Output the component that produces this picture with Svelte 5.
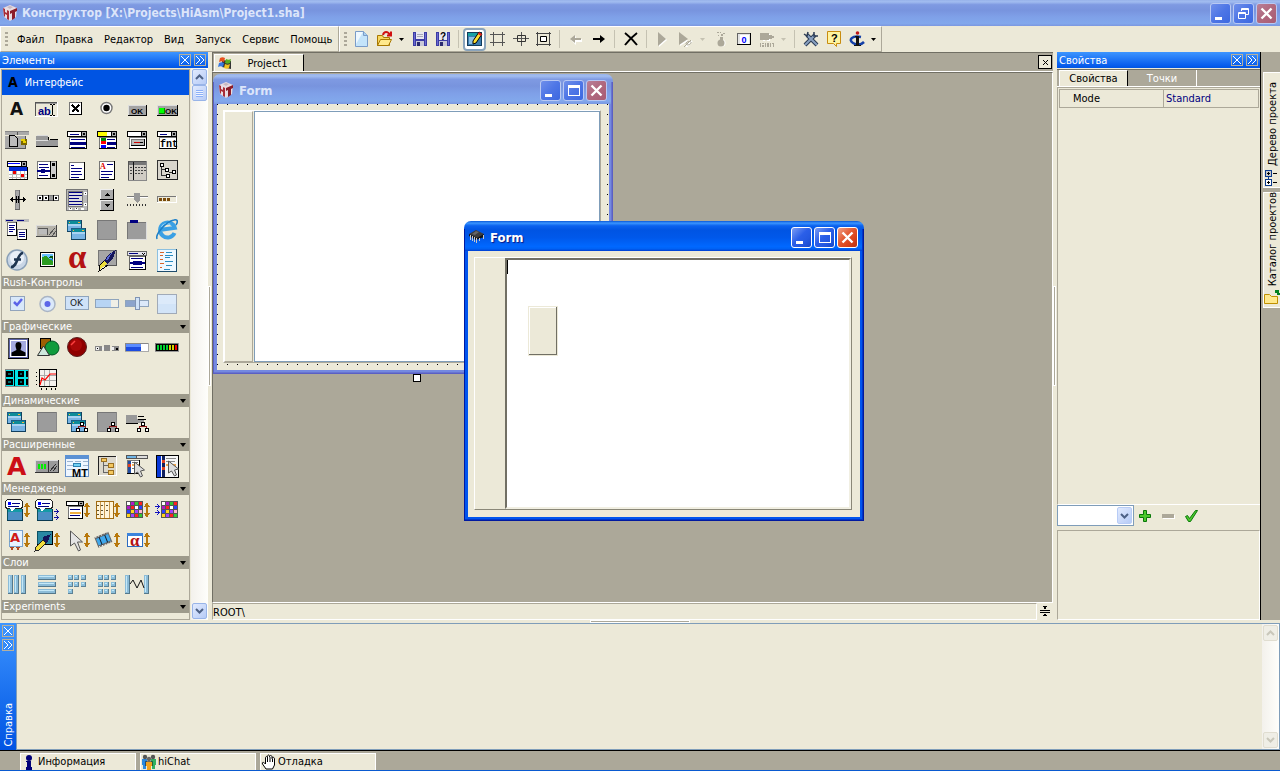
<script lang="ts">
	// Small helpers for the pixel icons
	const p = (fill: string, boxes: string) =>
		`<path fill="${fill}" d="${boxes
			.split(' ')
			.map((b) => {
				const [x, y, w, h] = b.split(',');
				return `M${x} ${y}h${w}v${h}h-${w}z`;
			})
			.join('')}"/>`;
	const s = (stroke: string, d: string, w = 1, fill = 'none') =>
		`<path fill="${fill}" stroke="${stroke}" stroke-width="${w}" d="${d}"/>`;
	const f = (fill: string, d: string) => `<path fill="${fill}" d="${d}"/>`;
	const t = (x: number, y: number, size: number, fill: string, text: string, font = 'Liberation Sans') =>
		`<text x="${x}" y="${y}" font-size="${size}" font-weight="bold" font-family="${font}" fill="${fill}">${text}</text>`;
	const c = (x: number, y: number, r: number, fill: string, stroke = 'none', w = 1) =>
		`<circle cx="${x}" cy="${y}" r="${r}" fill="${fill}" stroke="${stroke}" stroke-width="${w}"/>`;
	// framed box: dark right and bottom side, grey left and top
	const box = (x: number, y: number, w: number, h: number, fill = '#fff', tl = '#777', br = '#000') =>
		p(br, `${x},${y},${w},${h}`) + p(tl, `${x},${y},${w - 1},${h - 1}`) + p(fill, `${x + 1},${y + 1},${w - 2},${h - 2}`);
	const smooth = (markup: string) => `<g shape-rendering="auto">${markup}</g>`;

	const navy = '#000080';
	const comboHead = box(5, 6, 20, 6, '#fff', '#000') + p('#aaa', '20,7,4,4') + p('#000', '19,6,1,6 21,8,2,2');
	const comboBody = comboHead + box(7, 12, 18, 12);
	const win = (x: number, y: number) =>
		box(x, y, 15, 12, '#79b4e4', '#1d5c85', '#12405f') +
		p('#0d8b98', `${x + 1},${y + 1},13,3`) +
		p('#ffb43c', `${x + 2},${y + 2},1,1 ${x + 11},${y + 2},2,1`) +
		p('#a9d2f2', `${x + 1},${y + 4},13,2`);
	const links = (x: number, y: number) =>
		s('#8e1b1b', `M${x + 2.5} ${y + 7}v-3h7v3M${x + 4} ${y + 2.5}h4`) +
		box(x + 4, y, 4, 4, '#fff', '#000') +
		box(x, y + 6, 4, 4, '#fff', '#000') +
		box(x + 8, y + 6, 4, 4, '#fff', '#000');
	const updown = (x: number) => f('#b8780c', `M${x} 12l3-5 3 5h-2v1h-2v-1zM${x + 2} 13h2v5h2l-3 5-3-5h2z`);
	const bubble =
		box(5, 14, 16, 12, '#4b8fc4', '#0b5264', '#0b3950') +
		p('#169aa6', '6,14,14,3') +
		`<rect x="3.5" y="4.5" width="17" height="9" rx="3" fill="#fff" stroke="#222"/>` +
		f('#fff', 'M8 13h5l-3 4z') +
		p('#00f', '6,7,3,3') +
		p(navy, '10,8,8,1 6,11,11,1');
	const tabsPic = p('#999', '4,15,22,6 4,11,12,5') + p('#000', '4,21,22,1 16,12,1,3 18,14,8,1') + p('#ddd', '4,15,12,1 5,10,11,1');
	const palette = (x: number) =>
		p('#555', `${x},6,17,17`) +
		p('#fff', `${x + 1},7,3,3 ${x + 9},11,3,3`) +
		p('#b018c8', `${x + 5},7,3,3 ${x + 1},11,3,3`) +
		p('#32c832', `${x + 9},7,3,3 ${x + 13},19,3,3`) +
		p('#ff2020', `${x + 13},7,3,3 ${x + 5},11,3,3 ${x + 9},19,3,3`) +
		p('#2c40ff', `${x + 13},11,3,3 ${x + 1},15,3,3`) +
		p('#ffd21e', `${x + 5},15,3,3 ${x + 1},19,3,3`) +
		p('#a040ff', `${x + 9},15,3,3 ${x + 5},19,3,3`) +
		p('#ffb4d0', `${x + 13},15,3,3`);
	const cube = (x: number, y: number) =>
		p('#5d8296', `${x},${y},5,5`) + p('#8cc0dc', `${x},${y},4,4`) + p('#c4e8f8', `${x + 1},${y + 1},2,1`);
	const vbar = (x: number) => p('#54788c', `${x},6,5,19`) + p('#8cbcd8', `${x},6,4,18`) + p('#c4e8f8', `${x + 1},7,1,16`);
	const hbar = (y: number) => p('#54788c', `6,${y},18,5`) + p('#8cbcd8', `6,${y},17,4`) + p('#c4e8f8', `7,${y + 1},15,1`);

	const icons: Record<string, string> = {
		label: t(8, 20, 17, '#111', 'A', 'DejaVu Sans'),
		edit: box(3, 7, 23, 15, '#ece9d8', '#555', '#fff') + p('#999', '4,8,21,1') + t(6, 20, 11, navy, 'ab') + p('#000', '18,9,2,1 21,9,2,1 20,10,1,10 18,20,2,1 21,20,2,1'),
		check: box(7, 7, 13, 13, '#fff', '#777') + s('#000', 'M10 10l7 7M17 10l-7 7', 2),
		radio: smooth(c(14.5, 13, 5.5, '#fff', '#777', 1.4) + c(14.5, 13, 3.2, '#000')),
		button: box(6, 10, 19, 11, '#a3a3a3', '#ddd') + t(9, 19, 8, '#000', 'OK'),
		led: box(5, 10, 21, 11, '#a3a3a3', '#ddd') + p('#080', '7,13,6,6') + p('#0f0', '7,13,5,5') + t(13, 19, 8, '#000', 'OK'),
		pages: p('#888', '3,6,24,1') + p('#aaa', '3,7,24,3 3,11,20,12') + p('#555', '15,7,1,3 3,23,20,1 23,11,1,13') + s('#000', 'M7.5 10.500h5l3 3v8h-8z', 1, '#bbb') + p('#7a6500', '19,14,6,6') + p('#e8d000', '19,14,4,2 21,16,3,2'),
		tabs: tabsPic,
		combo: comboBody + p(navy, '8,9,9,1 9,14,14,1 8,17,16,3 9,22,14,1'),
		colorcombo: comboBody + p('#ff0', '6,7,9,4') + p('#080', '9,13,5,3') + p('#f00', '9,16,5,3') + p('#00f', '9,20,5,3') + p(navy, '15,14,8,1 15,17,9,3 15,22,8,1'),
		datecombo: comboBody + box(9, 14, 14, 7, '#bbb') + p('#c00', '12,17,6,1') + p('#000', '18,17,3,1'),
		fontcombo: comboBody + p(navy, '8,9,7,1') + t(8, 22, 10, '#000', 'fnt', 'Liberation Mono'),
		calendar: comboHead + p('#00f', '6,8,12,1') + p('#fff', '7,12,19,13') + p('#0028d8', '7,12,19,4') + p('#bbb', '10,16,1,8 14,16,1,8 18,16,1,8 22,16,1,8 7,19,18,1 7,22,18,1') + p('#e00', '11,16,3,3 19,19,3,3') + p('#000', '7,24,19,1 25,12,1,12'),
		listbox: box(5, 6, 20, 18) + p('#ccc', '19,7,5,16') + p('#000', '18,6,1,18 20,8,3,3 20,19,3,3') + p(navy, '7,9,9,1 7,12,10,1 5,15,13,2 9,14,4,4 7,20,9,1'),
		memo: box(7, 7, 16, 18) + p(navy, '9,10,3,1 9,13,11,1 9,16,10,1 9,19,11,1 9,22,8,1'),
		richedit: box(7, 6, 16, 19) + t(8, 14, 8, '#d00', 'A', 'Liberation Serif') + p(navy, '15,9,6,1 9,16,12,1 9,19,11,1 9,22,8,1'),
		grid: box(6, 6, 19, 20, '#d0ccc4', '#555', '#888') + p('#777', '7,7,17,3') + p('#111', '11,7,1,18') + p('#444', '8,12,2,1 13,12,2,1 16,12,2,1 19,12,2,1 22,12,2,1 8,15,2,1 13,15,2,1 16,15,2,1 19,15,2,1 22,15,2,1 8,18,2,1 13,18,2,1 16,18,2,1 19,18,2,1'),
		tree: box(5, 5, 21, 20, '#d8d5cc', '#333', '#222') + p('#333', '9,11,1,10 10,14,4,1 10,20,5,1 17,17,4,1') + box(8, 8, 4, 4, '#fff', '#000') + box(13, 13, 4, 4, '#fff', '#000') + box(20, 15, 4, 4, '#fff', '#000') + box(14, 19, 4, 4, '#fff', '#000'),
		splitter: box(13, 5, 5, 20, '#aaa', '#888', '#666') + p('#000', '8,14,16,1 9,13,2,3 10,12,1,5 21,13,2,3 21,12,1,5 14,11,1,7 16,11,1,7'),
		hscroll: box(5, 10, 22, 6, '#999', '#777', '#555') + p('#fff', '6,11,4,4 12,11,4,4 22,11,4,4') + p('#000', '7,12,2,2 13,12,2,2 23,12,2,2 10,10,1,6 16,10,1,6 21,10,1,6'),
		memoscroll: box(4, 4, 22, 22, '#bbb', '#777', '#777') + box(6, 6, 15, 16, '#ddd', '#777', '#777') + p(navy, '7,7,13,1 7,10,13,1 7,13,10,1 7,16,13,1 7,19,13,1') + p('#fff', '22,7,3,3 22,18,3,3 7,23,3,2 13,23,3,2 19,23,3,2') + p('#333', '23,8,1,1 23,19,1,1 8,23,1,1 14,23,1,1'),
		updown: box(8, 4, 14, 11, '#aaa', '#eee') + box(8, 15, 14, 11, '#aaa', '#eee') + f('#000', 'M12 11l3-3 3 3zM12 19h6l-3 3z'),
		track: p('#777', '5,11,21,1') + p('#fff', '5,12,21,1') + f('#999', 'M12 8h6v7l-3 3-3-3z') + p('#333', '5,19,1,2 8,19,1,2 11,19,1,2 14,19,1,2 17,19,1,2 20,19,1,2 23,19,1,2'),
		progress: box(5, 11, 20, 7, '#ece9d8', '#777', '#fff') + p('#7a4a08', '7,13,3,3 11,13,3,3 15,13,3,3'),
		menus: p('#bbb', '3,4,24,3') + p(navy, '4,5,7,1 15,5,7,1') + box(5, 7, 10, 14) + p(navy, '7,10,6,1 7,12,5,1 7,14,6,1 7,16,4,1') + box(15, 14, 10, 11) + p(navy, '17,17,6,1 17,19,6,1 17,21,6,1'),
		resize: box(4, 10, 21, 12, '#b5b2aa', '#ddd', '#444') + s('#555', 'M17 20l6-7M20 21l4-5M6 13.500h9v6') + p('#bbb', '7,14,8,5'),
		windows: win(5, 5) + win(9, 13),
		panel: box(5, 5, 20, 20, '#9c9c9c', '#777', '#888'),
		group: box(5, 7, 20, 18, '#9c9c9c', '#777', '#ddd') + p(navy, '8,5,8,3'),
		browser: smooth(`<g transform="rotate(-8 15 15)">` + s('#3aa0e4', 'M22 19a7.500 7.500 0 1 1 1-5H9', 4) + s('#9fdcff', 'M10 11a6 6 0 0 1 9-1', 1) + `</g>` + s('#1c7fc8', 'M5 24c-2-4 8-17 17-19 4-1 4 2 2 5', 1.6)),
		flash: smooth(c(15, 15, 10, '#c9d6e6', '#8aa0b8', 1.5) + c(15, 13, 7, '#e8eff8') + s('#1d3450', 'M21 8c-6 0-5 14-12 14M12 14.500h7', 2.6)),
		image: box(8, 7, 15, 15, '#fff', '#000') + p('#6ac0ff', '10,9,11,5') + p('#1e7fc8', '10,14,11,3') + f('#2c9c22', 'M10 12l4-1 4 4 3 1v4h-11z') + f('#0c5a10', 'M15 12l6-1v3z'),
		alpha: t(6, 23, 33, '#b41212', 'α', 'Liberation Serif'),
		pen: box(6, 5, 19, 16, '#a6a6a6', '#777', '#555') + f('#16165a', 'M24 5l-3 9-6 5-3-3 5-7z') + f('#5a6ad8', 'M20 8l-5 8-1-1 3-5z') + f('#eee03a', 'M12 16l3 3-4 3-4 3 1-5z') + s('#000', 'M12 16l-4 4-1 6 5-3 4-3'),
		flatcombo: box(5, 6, 20, 5, '#e4e4ec', '#666', '#666') + p(navy, '7,8,9,1') + s('#000', 'M20 8l1.500 1.500L23 8') + box(7, 11, 17, 14, '#fff', '#666') + p(navy, '9,13,12,1 8,17,15,2 11,16,9,4 9,22,12,1'),
		report: box(5, 4, 20, 23, '#eef8ff', '#8cc0e0', '#1e4c6c') + p('#d86428', '8,7,4,1 8,10,3,1 8,14,3,1 8,18,4,1 8,22,2,1') + p('#2a8cc0', '14,7,6,1 13,10,8,1 13,12,5,1 13,16,8,1 14,20,6,1 12,24,6,1'),
		rcheck: box(8, 7, 15, 15, '#d8e8fa', '#92a4bc', '#92a4bc') + smooth(s('#5b63e8', 'M12 13l3 3 5-6', 2.500)),
		rradio: smooth(c(15.5, 15, 7.5, '#dbe9fa', '#a9b4c4', 1.5) + c(15.5, 15, 3, '#5c66e8')),
		rbutton: box(3, 7, 24, 14, '#cfe2f8', '#8fa4bc', '#8fa4bc') + `<text x="8" y="17" font-size="9" font-family="DejaVu Sans" fill="#222">OK</text>`,
		rprogress: box(3, 10, 24, 9, '#f0efe6', '#8fa4bc', '#8fa4bc') + p('#b7d4f4', '4,11,15,7'),
		rtrack: p('#8fa4bc', '3,11,24,7') + p('#8ca4cc', '4,12,10,5') + p('#dce9fa', '17,12,9,5') + box(13, 8, 5, 13, '#cfe2f8', '#8094b4', '#8094b4'),
		rpanel: box(5, 5, 20, 20, '#d2e4f8', '#a0aab8', '#a0aab8') + p('#dceafa', '6,6,18,9'),
		person: box(6, 5, 21, 21, '#5b62a8', '#444') + box(8, 7, 17, 17, '#a4aae0', '#fff', '#fff') + smooth(f('#000', 'M16.500 9c3 0 3.500 3 2.500 6l-.5 2 5 2.500v3.500h-14v-3.500l5-2.500-.5-2c-1-3-.5-6 2.500-6z')),
		shapes: box(8, 5, 11, 11, '#9c5f04', '#000') + smooth(c(20, 15, 7, '#0f9b3c', '#052') + s('#333', 'M11.500 13l6 9.500H5.500z', 1, '#cfe8dc')),
		ball: smooth(c(15, 14, 9.500, '#8f0000', '#5a2020') + c(14, 12, 6, '#a80808') + s('#ff4040', 'M9 12l4-4', 1.500)),
		sliders: p('#888', '3,13,7,5 12,12,6,6 20,13,7,5') + p('#eee', '4,14,3,3 10,14,2,3 19,14,3,3') + p('#000', '5,15,1,1 24,15,2,2'),
		gauge: box(3, 10, 24, 9, '#fff', '#888', '#aaa') + p('#1c4ce0', '4,11,15,7') + p('#5a8cff', '4,11,15,3'),
		vu: box(3, 10, 24, 9, '#000', '#777', '#999') + p('#00d030', '5,12,2,5 8,12,2,5 11,12,2,5 14,12,2,5') + p('#d8d000', '17,12,2,5 20,12,2,5') + p('#e00', '23,12,2,5'),
		digits: box(3, 6, 24, 18, '#00e4e8', '#888', '#888') + p('#000', '4,8,7,6 4,16,7,6 16,8,6,6 16,16,6,6 12,7,1,16 24,8,2,6 24,16,2,6') + p('#00686c', '6,10,3,2 6,18,3,2 18,10,2,2 18,18,2,2'),
		chart: box(7, 6, 18, 18, '#f4f2ee', '#000') + p('#aaa', '12,7,1,16 17,7,1,16 8,12,16,1 8,17,16,1') + smooth(s('#f00', 'M8 22l2-7 3 2 5-6h6', 1.2)) + p('#000', '4,9,1,1 4,13,1,1 4,17,1,1 4,21,1,1 9,25,1,2 14,25,1,2 19,25,1,2 23,25,1,2'),
		dwindows: win(5, 5) + win(9, 13) + links(14, 15),
		dpanel: box(5, 5, 20, 20, '#9c9c9c', '#777', '#888') + links(15, 15),
		dtabs: p('#999', '4,8,11,5 4,12,18,4') + p('#000', '16,9,6,1 16,12,8,1 4,16,12,1') + links(15, 15),
		bigA: t(5, 24, 25, '#cc0e16', 'A', 'DejaVu Sans'),
		size: box(3, 9, 24, 13, '#9a9a9a', '#ddd', '#333') + p('#0e0', '6,13,2,5 9,13,2,5 12,13,2,5') + s('#333', 'M18 20l6-7M21 20l4-5') + p('#333', '16,10,1,11'),
		mt: box(3, 4, 24, 22, '#eef6ff', '#6c94c8', '#6c94c8') + p('#5c92d4', '3,4,24,4') + p('#9cb4d0', '5,10,6,1 13,10,6,1 21,10,5,1 5,14,6,1 21,14,5,1 5,18,6,1') + box(11, 12, 8, 4, '#6ed0f4', '#2c80b0', '#2c80b0') + t(10, 26, 11, '#000', 'MT'),
		folders: box(6, 5, 19, 20, '#dcd8cc', '#222', '#fff') + p('#666', '11,11,1,11 12,14,4,1 12,21,4,1') + box(9, 7, 6, 4, '#f4c860', '#9c7020', '#9c7020') + box(16, 12, 6, 5, '#f4c860', '#9c7020', '#9c7020') + box(16, 19, 6, 5, '#f4c860', '#9c7020', '#9c7020'),
		popup: p('#555', '4,4,22,4') + p('#6fb4e4', '5,5,9,2') + p('#ddd', '15,5,10,2') + box(5, 9, 13, 14) + p('#224ca0', '6,10,3,12') + p('#e04020', '6,13,3,3') + p('#f0b060', '10,13,7,2') + p('#777', '10,11,6,1 10,17,5,1') + smooth(s('#555', 'M12.500 11v12l3-2 3 5 2-1-2-5 4-1z', 1, '#ddd')),
		popup2: box(4, 4, 23, 23, '#f6f6f6', '#000') + p('#0838d8', '5,5,4,21') + p('#102060', '10,5,3,21') + p('#e04020', '10,9,3,3 10,16,3,3') + p('#888', '14,7,10,1 14,10,9,1') + p('#f0a850', '14,13,10,2') + smooth(s('#555', 'M16.500 10v12l3-2 3 5 2-1-2-5 4-1z', 1, '#ddd')),
		hint: bubble + updown(22),
		hint2: bubble + p('#1010a0', '22,16,5,1 24,14,1,1 25,15,1,3 24,18,1,1 22,22,5,1 24,20,1,1 25,21,1,3 24,24,1,1'),
		mcombo: box(4, 6, 18, 5, '#fff', '#000') + p('#aaa', '17,7,4,3') + p('#000', '16,6,1,5 18,8,2,1') + box(6, 11, 15, 13) + p(navy, '8,14,10,1 8,20,10,1') + p('#f0b040', '8,17,11,2') + updown(22),
		mgrid: box(4, 6, 18, 18, '#fff4d8', '#a06a10', '#a06a10') + p('#c89850', '8,7,1,16 12,7,1,16 17,7,1,16') + p('#5c5030', '5,10,2,1 9,10,2,1 14,10,2,1 5,15,2,1 9,15,2,1 14,15,2,1 5,19,2,1 9,19,2,1') + updown(22),
		mpalette: palette(4) + updown(22),
		mpalette2: palette(9) + p('#1010c0', '3,11,5,1 5,9,1,1 6,10,1,3 5,13,1,1 3,17,5,1 5,15,1,1 6,16,1,3 5,19,1,1'),
		mfont: box(7, 5, 14, 17, '#e8f4ff', '#7aa4d0', '#7aa4d0') + t(8, 17, 13, '#d01818', 'A', 'DejaVu Sans') + f('#b04820', 'M8 22h4l-2 4zM14 22h4l-2 4z') + updown(22),
		mpen: box(5, 6, 16, 14, '#2a88a4', '#0b5264') + f('#14145a', 'M19 9l-4 9-5 1 1-7z') + s('#222', 'M11 15l3 3-7 7-4 1 1-4z', 1, '#f0dc3c') + updown(22),
		mcursor: smooth(s('#555', 'M8.500 6v15l4-3 4 8 2-1-3-8h5z', 1, '#e4e4e4')) + updown(22),
		mfilm: smooth(`<g transform="rotate(-22 12 15)">` + p('#666', '4,9,15,11') + p('#40a8ec', '5,11,13,7') + p('#123', '8,10,1,9 14,10,1,9') + p('#fff', '5,9,1,1 8,9,1,1 11,9,1,1 14,9,1,1 17,9,1,1 5,19,1,1 8,19,1,1 11,19,1,1 14,19,1,1 17,19,1,1') + `</g>`) + updown(22),
		malpha: box(5, 8, 16, 14, '#fff', '#2c6cc0', '#2c6cc0') + p('#3c84dc', '5,8,16,3') + t(8, 21, 17, '#b41212', 'α', 'Liberation Serif') + updown(22),
		cols: vbar(6) + vbar(12) + vbar(19),
		rows: hbar(6) + hbar(13) + hbar(20),
		flow: cube(6, 6) + cube(12, 6) + cube(19, 6) + cube(6, 13) + cube(12, 13) + cube(19, 13) + cube(6, 20),
		table: cube(6, 6) + cube(12, 6) + cube(19, 6) + cube(6, 13) + cube(12, 13) + cube(19, 13) + cube(6, 20) + cube(12, 20) + cube(19, 20),
		spring: vbar(3) + vbar(22) + smooth(s('#111', 'M8 15l3-4 4 8 4-8 3 8'))
	};

	const groups = [
		{
			name: '',
			items: 'label edit check radio button led pages tabs combo colorcombo datecombo fontcombo calendar listbox memo richedit grid tree splitter hscroll memoscroll updown track progress menus resize windows panel group browser flash image alpha pen flatcombo report'
		},
		{ name: 'Rush-Контролы', items: 'rcheck rradio rbutton rprogress rtrack rpanel' },
		{ name: 'Графические', items: 'person shapes ball sliders gauge vu digits chart' },
		{ name: 'Динамические', items: 'windows panel dwindows dpanel dtabs' },
		{ name: 'Расширенные', items: 'bigA size mt folders popup popup2' },
		{ name: 'Менеджеры', items: 'hint hint2 mcombo mgrid mpalette mpalette2 mfont mpen mcursor mfilm malpha' },
		{ name: 'Слои', items: 'cols rows flow table spring' },
		{ name: 'Experiments', items: '' }
	];

	const grey = '#aca899';
	const floppy = p('#3c3ca4', '1,1,14,14') + p('#6a6ad0', '2,2,1,12 13,2,1,12') + p('#e8e8f0', '4,1,8,7') + p('#a8a8b8', '5,3,6,1 5,5,6,1') + p('#c8c8d8', '4,10,8,5') + p('#2a2a70', '5,11,3,4');
	const tools: Record<string, string> = {
		'new': s('#7a9cc8', 'M1.500 .5h8l4 4v11h-12z', 1, '#c4e4fa') + f('#eef8ff', 'M2 1h7L2 13z') + s('#7a9cc8', 'M9.500 .5v4h4', 1, '#a8d0f0'),
		'open': s('#a87800', 'M.5 14.500v-10h5l1 2h6v8z', 1, '#f8d860') + s('#a87800', 'M.5 14.500l3-6h11l-3 6z', 1, '#ffe98c') + s('#d01010', 'M6 4c1-4 5-4 7 0M10 4.500h4v-4', 2),
		'save': floppy,
		'save-as': floppy + p('#e8e8f0', '4,1,8,8') + t(5, 9, 10, '#000', '?'),
		'edit': box(0, 1, 15, 14, '#3c7cb0', '#123c5c', '#123c5c') + p('#18a0a4', '1,2,13,3') + p('#8cc0e4', '2,6,6,7') + s('#000', 'M12 1l3 2-6 9-3 1v-3z', 1, '#ffe030') + f('#e02020', 'M12 1l3 2-1 2-3-2z'),
		'grid': p('#555', '3,1,1,14 12,1,1,14 0,3,15,1 0,11,15,1'),
		'center': p('#555', '8,1,1,14 0,7,16,1') + s('#333', 'M4.500 4.500h8v6h-8z'),
		'fit': s('#444', 'M0 2.500h15M0 13.500h15M1.500 1v14M13.500 1v14') + s('#000', 'M4.500 5.500h6v5h-6z', 1, '#fff'),
		'back': f('#fff', 'M3 9l5-4v3h6v3h-6v3z') + f(grey, 'M2 8l5-4v3h6v2H7v3z'),
		'forward': f('#000', 'M14 8L9 4v3H2v2h7v3z'),
		'delete': s('#000', 'M2 2c4 3 8 7 12 12M14 2C10 5 6 9 2 14', 2),
		'run': f('#fff', 'M4 2v14l8-7z') + f(grey, 'M3 1v14l8-7z'),
		'run-debug': f('#fff', 'M2 2v13l8-5z') + f(grey, 'M1 1v13l9-6z') + s('#fff', 'M8 16l6-6', 2) + s(grey, 'M8 12c1-2 6-2 5 0s-5 3-5 0zM6 16l7-7'),
		'clean': c(9, 12, 3.500, '#fff') + c(8, 12, 3.500, grey) + p(grey, '7,6,3,3 4,1,2,1 7,1,1,1 8,3,2,2 10,2,2,1 5,4,1,1'),
		'zero': box(1, 2, 14, 12, '#e4e4e4', '#666') + p('#fff', '4,4,9,9') + t(5.5, 11.5, 9, '#00f', '0'),
		'make': p('#fff', '2,3,9,7') + p(grey, '1,2,9,7 10,4,3,4 13,5,2,2 1,12,1,4 3,12,2,1 3,14,2,2 6,12,1,4 8,12,2,4 11,12,1,4 13,12,2,1 14,13,1,3') + p('#ece9d8', '2,9,2,1 6,9,2,1'),
		'tools': s('#2c3c54', 'M4 4l10 10M12 4L2 14', 4) + s('#88a0c0', 'M4 4l10 10M12 4L2 14', 2) + s('#2c3c54', 'M1 3l3 2 1-4M11 1v4h4', 1.5),
		'help': s('#c88c10', 'M1.500 .5h13v12h-4v3l-3-3h-6z', 1, '#fff4a0') + t(5, 11, 11, '#000', '?'),
		'about': s('#1440a8', 'M12 6c-9-2-13 3-8 6s9 1 11-1', 2.500) + p('#111', '7,5,3,10 5,14,7,1 6,5,2,1') + c(8.5, 2, 1.800, '#c01818')
	};
	// '|' is a separator, 'v' a drop-down arrow, 'x' a disabled one
	const toolbar = 'new open v save save-as | edit grid center fit | back forward | delete | run run-debug x clean zero make x | tools help about v'.split(' ');

	const menu = ['Файл', 'Правка', 'Редактор', 'Вид', 'Запуск', 'Сервис', 'Помощь'];

	const info = p('#000078', '5,7,5,1 6,8,4,6 5,13,6,3') + c(8, 4, 3, '#000078');
	const people =
		f('#2a88e0', 'M1 5h5v6H5v4H2v-4H1z') +
		f('#30b060', 'M10 5h5v6h-1v4h-3v-4h-1z') +
		c(4, 3, 2.2, '#555') +
		c(12, 3, 2.2, '#555') +
		f('#f0a020', 'M5 8h6v4h-1v4H6v-4H5z') +
		c(8, 5, 2.2, '#666') +
		s('#222', 'M4.500 12V7.500h7V12', 0.6);
	const hand = s('#000', 'M5 15L1.500 10c-1-2 1-2 2-1l1 1V4c0-2 2-2 2 0V2.500c0-2 2-2 2 0V3c0-2 2.500-2 2.500 0v1.500c0-2 2.500-1.500 2.500.5v6l-2 4zM6.500 4v4M9 3v5M11.500 4.500V8', 1, '#fff');
	const bottomTabs = [
		{ name: 'Информация', icon: info },
		{ name: 'hiChat', icon: people },
		{ name: 'Отладка', icon: hand }
	];

	const projectTree = p('#0a3a8c', '4,6,1,4') + box(1, 0, 7, 7, '#c8c8c8', '#0a3a8c', '#0a3a8c') + box(1, 9, 7, 7, '#fff', '#0a3a8c', '#0a3a8c') + p('#000', '3,3,3,1 4,2,1,3 3,12,3,1 4,11,1,3 9,3,4,1 9,12,4,1');
	const catalog = s('#c09000', 'M.5 13.500v-9h5l2 2h6v7z', 1, '#ffe98c') + p('#008020', '11,0,4,3 13,3,3,2');

	let preset = $state('');
	let text = $state('');
	let designText = $state('');
</script>

{#snippet pic(markup: string, size: number)}
	<svg width={size} height={size} viewBox="0 0 {size} {size}" shape-rendering={size === 30 ? 'crispEdges' : 'auto'} aria-hidden="true">{@html markup}</svg>
{/snippet}

{#snippet logo()}
	<svg class="logo" width="16" height="16" viewBox="0 0 16 16" aria-hidden="true">
		<path fill="#e8dce2" d="M1 3l7-3 7 3-1 9-6 4-6-4z" />
		<path fill="#a82c38" d="M1 3l2 1v3l2 1V5l2 1v9l-2-1v-4l-2-1v3l-1-1z" />
		<path fill="#8c1c28" d="M8 6l7-3v3l-2 1v6l-3 2V8l-2 1z" />
		<path fill="#c8b8c0" d="M5 2l3-1 3 1-3 2z" />
	</svg>
{/snippet}

{#snippet caption(restored: boolean)}
	<span class="caption-buttons">
		<button aria-label="Minimize"><svg width="19" height="19"><path fill="#fff" d="M4 13h7v3H4z" /></svg></button>
		<button aria-label="Maximize">
			<svg width="19" height="19">
				{#if restored}
					<path fill="none" stroke="#fff" d="M7.500 7V4.500h7v6H12M4.500 8.500h7v6h-7zM7 5.500h8M4 9.500h8" />
				{:else}
					<path fill="#fff" fill-rule="evenodd" d="M4 4h12v11H4zM5 7v7h10V7z" />
				{/if}
			</svg>
		</button>
		<button class="close" aria-label="Close"><svg width="19" height="19"><path fill="none" stroke="#fff" stroke-width="2.4" d="M4.500 4.500l10 10M14.500 4.500l-10 10" /></svg></button>
	</span>
{/snippet}

{#snippet paneButtons()}
	<span class="pane-buttons">
		<button aria-label="Close pane"><svg width="10" height="10"><path d="M1 1l8 8M9 1l-8 8" /></svg></button>
		<button aria-label="Collapse pane"><svg width="10" height="10"><path d="M1 1l4 4-4 4M5 1l4 4-4 4" /></svg></button>
	</span>
{/snippet}

{#snippet scrollbar(disabled: boolean)}
	<div class="scrollbar" class:disabled>
		<button aria-label="Scroll up"><svg width="9" height="6"><path d="M1 5l3.500-3.500L8 5" /></svg></button>
		{#if !disabled}
			<div class="thumb"></div>
		{/if}
		<button class="down" aria-label="Scroll down"><svg width="9" height="6"><path d="M1 1l3.500 3.500L8 1" /></svg></button>
	</div>
{/snippet}

<div class="app">
	<header class="title inactive">
		{@render logo()}
		<h1>Конструктор [X:\Projects\HiAsm\Project1.sha]</h1>
		{@render caption(true)}
	</header>

	<div class="bars">
		<nav class="bar menu">
			<i class="grip"></i>
			{#each menu as item}
				<button>{item}</button>
			{/each}
		</nav>
		<div class="bar">
			<i class="grip"></i>
			{#each toolbar as tool}
				{#if tool === '|'}
					<i class="sep"></i>
				{:else if tool === 'v' || tool === 'x'}
					<button class="drop" class:off={tool === 'x'} aria-label="More"><svg width="5" height="3"><path d="M0 0h5L2.500 3z" /></svg></button>
				{:else}
					<button class="tool" class:active={tool === 'edit'} aria-label={tool}>{@render pic(tools[tool], 16)}</button>
				{/if}
			{/each}
		</div>
	</div>

	<main>
		<aside class="elements">
			<div class="pane-title">Элементы {@render paneButtons()}</div>
			<div class="elements-body">
				<div class="list">
					<button class="current"><b>A</b>Интерфейс</button>
					{#each groups as group}
						{#if group.name}
							<button class="group">{group.name}<svg width="6" height="4"><path d="M0 0h6L3 4z" /></svg></button>
						{/if}
						{#if group.items}
							<div class="icons">
								{#each group.items.split(' ') as item}
									<button aria-label={item}>{@render pic(icons[item], 30)}</button>
								{/each}
							</div>
						{/if}
					{/each}
				</div>
				{@render scrollbar(false)}
			</div>
		</aside>
		<div class="splitter"></div>

		<section class="editor">
			<div class="tabs">
				<button class="tab on">
					<svg width="14" height="14" viewBox="0 0 14 14" aria-hidden="true">
						<path fill="#333" d="M4 4l9 1v8l-9-2z" />
						<path fill="#e8501c" d="M2 2c2-1 3-1 5 0L6 6c-2-1-3-1-5 0z" />
						<path fill="#58b020" d="M8 3c2 1 3 1 5 0l-1 4c-2 1-3 1-5 0z" />
						<path fill="#3878e0" d="M1 7c2-1 3-1 5 0l-1 4c-2-1-3-1-5 0z" />
						<path fill="#f0c020" d="M7 8c2 1 3 1 5 0l-1 4c-2 1-3 1-5 0z" />
					</svg>
					<span>Project1</span>
				</button>
				<button class="tab-close" aria-label="Close tab"><svg width="7" height="7"><path d="M1 1l5 5M6 1L1 6" /></svg></button>
			</div>
			<div class="desk">
				<div class="window design">
					<div class="title inactive">
						{@render logo()}
						<h2>Form</h2>
						{@render caption(false)}
					</div>
					<div class="client">
						<div class="frame">
							<div class="strip"></div>
							<textarea aria-label="Memo" bind:value={designText}></textarea>
						</div>
					</div>
					<i class="handle"></i>
				</div>
				<div class="window running">
					<div class="title">
						<svg class="logo" width="16" height="16" viewBox="0 0 16 16" aria-hidden="true">
							<path fill="#3c3c3c" d="M0 5l7-4 8 4-7 5z" />
							<path fill="#666" d="M3 5l4-3 3 1-4 3z" />
							<path fill="#111" d="M0 5l8 4 7-4v3l-8 3-7-4z" />
							<path stroke="#c8c8c8" d="M1.500 6v5M3.500 7v5M5.500 8v5M7.500 9v5M10.500 9v3M14.500 6v4" />
						</svg>
						<h2>Form</h2>
						{@render caption(false)}
					</div>
					<div class="client">
						<div class="frame">
							<div class="strip"></div>
							<textarea aria-label="Text" bind:value={text}></textarea>
							<i class="caret"></i>
							<button class="blank" aria-label="Button"></button>
						</div>
					</div>
				</div>
			</div>
			<div class="status">
				<span>ROOT\</span>
				<button aria-label="Fit"><svg width="10" height="11"><path d="M3 0h4v1H3zM4 1h2v2H4zM0 4h10v1H0zM0 6h10v1H0zM4 8h2v1H4zM3 9h4v1H3z" /></svg></button>
			</div>
		</section>
		<div class="splitter"></div>

		<aside class="props">
			<div class="pane-title">Свойства {@render paneButtons()}</div>
			<div class="tabs">
				<button class="tab on">Свойства</button>
				<button class="tab">Точки</button>
			</div>
			<div class="prop-list">
				<table>
					<tbody>
						<tr><th scope="row">Mode</th><td>Standard</td></tr>
					</tbody>
				</table>
			</div>
			<div class="prop-tools">
				<span class="combo">
					<select aria-label="Property set" bind:value={preset}><option value=""></option></select>
					<span><svg width="9" height="6"><path d="M1 1l3.500 3.500L8 1" /></svg></span>
				</span>
				<button aria-label="Add"><svg width="14" height="14"><path fill="#4cc82c" stroke="#087808" d="M5.500 1.500h3v4h4v3h-4v4h-3v-4h-4v-3h4z" /></svg></button>
				<button aria-label="Remove"><svg width="14" height="14"><path fill="#fff" d="M2 6h12v4H2z" /><path fill="#aca899" d="M1 5h12v4H1z" /></svg></button>
				<button aria-label="Apply"><svg width="14" height="14"><path fill="#4cc82c" stroke="#087808" d="M1.500 7.500l2-1 2 3 6-8h2l-7 11h-2z" /></svg></button>
			</div>
			<div class="prop-help"></div>
		</aside>

		<nav class="side">
			<button>{@render pic(projectTree, 16)}<span>Дерево проекта</span></button>
			<button>{@render pic(catalog, 16)}<span>Каталог проектов</span></button>
		</nav>
	</main>

	<div class="splitter flat"></div>
	<section class="help">
		<div class="help-title">{@render paneButtons()}<span>Справка</span></div>
		<div class="help-body">{@render scrollbar(true)}</div>
	</section>

	<footer>
		{#each bottomTabs as tab}
			<button>{@render pic(tab.icon, 16)}<span>{tab.name}</span></button>
		{/each}
	</footer>
</div>

<style>
	:global(body) {
		margin: 0;
		background: #ece9d8;
	}
	.app {
		display: flex;
		flex-direction: column;
		height: 100vh;
		overflow: hidden;
		background: #ece9d8;
		color: #000;
		font-family: Tahoma, 'DejaVu Sans Condensed', 'DejaVu Sans', sans-serif;
		font-size: 11px;
		line-height: 13px;
		box-sizing: border-box;
	}
	.app :global(*) {
		box-sizing: border-box;
	}
	.app :global(svg) {
		display: block;
		flex: none;
	}
	button {
		border: 0;
		padding: 0;
		background: none;
		color: inherit;
		font: inherit;
		white-space: nowrap;
	}

	/* window captions */
	.title {
		display: flex;
		flex: none;
		align-items: center;
		height: 30px;
		padding: 2px 6px 0 5px;
		color: #fff;
		background: linear-gradient(#0a58d8, #3a95ff 7%, #0b62ee 16%, #0054e3 30%, #0058ea 55%, #0068ff 85%, #0062f4 93%, #003dd0);
	}
	.title.inactive {
		color: #dce5fa;
		background: linear-gradient(#97b2ea, #a2bdf0 7%, #7f9ae2 18%, #7894de 40%, #7fa0e8 65%, #82a8ec 90%, #7b97e0);
	}
	header.title {
		height: 26px;
		padding: 0 3px 0 2px;
	}
	.title h1,
	.title h2 {
		flex: 1;
		margin: 0 0 0 4px;
		font-size: 12px;
		line-height: 16px;
		font-weight: bold;
		white-space: nowrap;
	}
	.title h2 {
		font-size: 13px;
		margin-left: 5px;
		padding-top: 1px;
	}
	.running h2 {
		text-shadow: 1px 1px 1px #0a1883;
	}
	.caption-buttons {
		display: flex;
		gap: 2px;
	}
	.caption-buttons button {
		width: 21px;
		height: 21px;
		border: 1px solid #fff;
		border-radius: 3px;
		background: linear-gradient(135deg, #7c9df4, #2b5fe8 45%, #2458e0 70%, #1747c8);
	}
	.caption-buttons .close {
		background: linear-gradient(135deg, #f0a088, #e2572f 45%, #d8431c 70%, #b83010);
	}
	.inactive .caption-buttons button {
		border-color: #b9c9f3;
		background: linear-gradient(135deg, #6f8fea, #4e76e6 50%, #3c68e0);
	}
	.inactive .caption-buttons .close {
		background: linear-gradient(135deg, #b98098, #b0687e 50%, #a85c74);
	}

	/* menu and toolbar */
	.bars {
		display: flex;
		flex: none;
		height: 26px;
	}
	.bar {
		display: flex;
		align-items: center;
		padding: 0 1px 0 4px;
		border: solid;
		border-width: 1px;
		border-color: #fff #aca899 #aca899 #fff;
	}
	.menu {
		gap: 11px;
		padding-right: 6px;
	}
	.menu .grip {
		margin-right: -2px;
	}
	.grip {
		width: 3px;
		height: 14px;
		margin-right: 3px;
		background: repeating-linear-gradient(#aca899 0 2px, transparent 2px 4px);
	}
	.tool {
		display: grid;
		place-items: center;
		width: 23px;
		height: 23px;
	}
	.tool.active {
		border: 2px solid #8aa4bc;
		border-radius: 4px;
		background: #fff;
	}
	.drop {
		width: 12px;
		padding-left: 3px;
	}
	.drop.off {
		color: #c5c2b2;
	}
	.drop path,
	.group path,
	.status path {
		fill: currentColor;
	}
	.sep {
		width: 1px;
		height: 18px;
		margin: 0 4px;
		background: #c5c2b2;
	}

	main {
		display: flex;
		flex: 1;
		min-height: 0;
	}
	.pane-title {
		display: flex;
		flex: none;
		align-items: center;
		justify-content: space-between;
		height: 16px;
		padding: 0 2px;
		color: #fff;
		background: linear-gradient(#3d95ff, #0a5fee 80%, #0054e3);
	}
	.pane-buttons {
		display: flex;
		gap: 3px;
	}
	.pane-buttons button {
		width: 12px;
		height: 12px;
		border: 1px solid #b4b0a0;
	}
	.pane-buttons path,
	.tab-close path {
		fill: none;
		stroke: currentColor;
	}
	.elements {
		display: flex;
		flex-direction: column;
		width: 208px;
		flex: none;
	}
	.elements-body {
		display: flex;
		flex: 1;
		min-height: 0;
		gap: 1px;
	}
	.list {
		flex: 1;
		margin: 1px 0 0 1px;
		overflow: hidden;
		border: 1px solid #aca899;
	}
	.current {
		display: flex;
		align-items: center;
		gap: 7px;
		width: 100%;
		height: 25px;
		padding-left: 6px;
		color: #fff;
		background: #0054e3;
	}
	.current b {
		color: #000;
		font-size: 14px;
	}
	.group {
		display: flex;
		align-items: center;
		justify-content: space-between;
		width: 100%;
		height: 13px;
		padding: 0 3px 0 1px;
		color: #fff;
		background: #9d9a8b;
	}
	.group path {
		fill: #000;
	}
	.icons {
		display: flex;
		flex-wrap: wrap;
		padding-bottom: 1px;
	}
	.icons button {
		width: 30px;
		height: 30px;
	}
	.scrollbar {
		display: flex;
		flex-direction: column;
		width: 17px;
		padding: 1px;
		background: linear-gradient(90deg, #f3f1ec, #fefefb);
	}
	.scrollbar button,
	.thumb,
	.combo > span {
		display: grid;
		place-items: center;
		height: 16px;
		border: 1px solid #98b4e8;
		border-radius: 2px;
		background: linear-gradient(135deg, #e1eafe, #b6cbf6);
	}
	.scrollbar path,
	.combo path {
		fill: none;
		stroke: #4d6185;
		stroke-width: 2;
	}
	.scrollbar .down {
		margin-top: auto;
	}
	.thumb::before {
		content: '';
		width: 7px;
		height: 7px;
		background: repeating-linear-gradient(#8cb0f8 0 1px, #eef4fe 1px 2px);
	}
	.scrollbar.disabled button {
		border-color: #e0ddd0;
		background: #efeee6;
	}
	.scrollbar.disabled path {
		stroke: #c9c7ba;
	}

	.splitter {
		display: flex;
		align-items: center;
		flex: none;
		width: 4px;
	}
	.splitter::before {
		content: '';
		width: 1px;
		height: 98px;
		border: 1px solid #fff;
		background: #aca899;
	}
	.splitter.flat {
		justify-content: center;
		width: 100%;
		height: 3px;
	}
	.splitter.flat::before {
		width: 98px;
		height: 1px;
	}

	/* tab strips */
	.tabs {
		display: flex;
		flex: none;
		height: 18px;
		padding-left: 2px;
		border-top: 1px solid #716f64;
		border-bottom: 1px solid #fff;
		background: #aca899;
	}
	.tab {
		width: 69px;
		color: #fff;
		border-right: 1px solid #fff;
	}
	.tab.on {
		color: #000;
		background: #ece9d8;
		border-top: 1px solid #fff;
		border-left: 1px solid #fff;
		border-right: 1px solid #000;
	}
	.editor {
		display: flex;
		flex: 1;
		flex-direction: column;
		min-width: 0;
	}
	.editor .tabs {
		height: 20px;
		padding: 1px 1px 0 1px;
		border-left: 1px solid #716f64;
		justify-content: space-between;
	}
	.editor .tab {
		display: flex;
		align-items: center;
		width: 90px;
		padding-left: 3px;
	}
	.editor .tab span {
		flex: 1;
	}
	.tab-close {
		display: grid;
		place-items: center;
		width: 14px;
		height: 14px;
		margin-top: 1px;
		border: 1px solid #000;
		background: #ece9d8;
	}
	.desk {
		position: relative;
		flex: 1;
		overflow: hidden;
		border: 1px solid #716f64;
		border-right-color: #fff;
		border-bottom-color: #fff;
		background: #aca899;
	}
	.window {
		position: absolute;
		display: flex;
		flex-direction: column;
		width: 400px;
		height: 300px;
		border-radius: 7px 7px 0 0;
	}
	.design {
		top: 1px;
		left: 0;
	}
	.running {
		top: 148px;
		left: 251px;
	}
	.window .title {
		border-radius: 7px 7px 0 0;
	}
	.client {
		flex: 1;
		display: flex;
		padding: 6px 8px 7px 6px;
		border: solid #0054ee;
		border-width: 0 4px 4px;
		background: #ece9d8;
	}
	/* darker outer edge over sides and bottom */
	.window::after {
		content: '';
		position: absolute;
		inset: 8px 0 0;
		border: solid #0019a0;
		border-width: 0 1px 1px;
		box-shadow: inset -1px -1px #0036c8;
		pointer-events: none;
	}
	.design::after {
		border-color: #5a5fc4;
		box-shadow: inset -1px -1px #6874d0;
	}
	.design .client {
		border-color: #7489e0;
		background: #ece9d8 conic-gradient(from 270deg at 1px 1px, #000 90deg, transparent 0) 0 0 / 10px 10px;
	}
	.frame {
		position: relative;
		display: flex;
		flex: 1;
		border: solid;
		border-width: 1px;
		border-color: #fff #8a8778 #8a8778 #fff;
		background: #ece9d8;
	}
	.design .frame {
		border-color: #fff #aca899 #aca899 #fff;
	}
	.strip {
		width: 30px;
		flex: none;
	}
	.design .strip {
		width: 29px;
		margin-right: 1px;
		border: solid;
		border-width: 1px;
		border-color: #fff #aca899 #aca899 #fff;
	}
	textarea {
		flex: 1;
		resize: none;
		margin: 0;
		border: 1px solid #7f9db9;
		border-radius: 0;
		background: #fff;
		font: inherit;
		outline: 0;
	}
	.running textarea {
		border: 2px solid;
		border-color: #716f64 #f1efe2 #f1efe2 #716f64;
	}
	.caret {
		position: absolute;
		top: 2px;
		left: 32px;
		width: 1px;
		height: 14px;
		background: #000;
	}
	.blank {
		position: absolute;
		top: 48px;
		left: 53px;
		width: 30px;
		height: 50px;
		border: 1px solid #ece9d8;
		background: #ece9d8;
		box-shadow: inset -1px -1px #716f64, inset 1px 1px #fff;
	}
	.handle {
		position: absolute;
		top: 300px;
		left: 200px;
		width: 8px;
		height: 8px;
		border: 1px solid #000;
		background: #fff;
	}
	.status {
		display: flex;
		flex: none;
		align-items: center;
		height: 17px;
	}
	.status span {
		flex: 1;
		height: 17px;
		padding-top: 2px;
		border: solid;
		border-width: 1px;
		border-color: #aca899 #fff #fff #aca899;
	}
	.status button {
		padding: 0 3px;
	}

	/* properties */
	.props {
		display: flex;
		flex-direction: column;
		width: 204px;
		flex: none;
		border-right: 1px solid #000;
	}
	.props .tabs {
		margin-top: 1px;
	}
	.prop-list {
		flex: 1;
		padding: 1px;
		border-left: 1px solid #aca899;
		border-top: 1px solid #aca899;
		border-bottom: 1px solid #fff;
	}
	table {
		width: 100%;
		border-collapse: collapse;
	}
	th,
	td {
		height: 18px;
		padding: 0 2px;
		border: 1px solid #aca899;
		text-align: left;
		font-weight: normal;
	}
	th {
		width: 104px;
		padding-left: 13px;
	}
	td {
		color: #000080;
	}
	.prop-tools {
		display: flex;
		flex: none;
		align-items: center;
		gap: 9px;
		height: 25px;
		padding-bottom: 4px;
	}
	.combo {
		position: relative;
		width: 77px;
		margin-right: -5px;
	}
	select {
		appearance: none;
		display: block;
		width: 100%;
		height: 21px;
		border: 1px solid #7f9db9;
		border-radius: 0;
		background: #fff;
		font: inherit;
	}
	.combo > span {
		position: absolute;
		top: 2px;
		right: 2px;
		width: 15px;
		height: 17px;
		pointer-events: none;
		border-color: #b8ccf6;
	}
	.prop-help {
		flex: none;
		height: 90px;
		border: solid;
		border-width: 1px;
		border-color: #aca899 #fff #fff #aca899;
	}
	.side {
		display: flex;
		flex-direction: column;
		gap: 4px;
		width: 19px;
		flex: none;
		padding: 20px 0 0 2px;
		background: #aca899;
	}
	.side button {
		display: flex;
		flex-direction: column-reverse;
		align-items: center;
		gap: 4px;
		height: 116px;
		padding-bottom: 1px;
		border: 1px solid #fff;
		border-right: 0;
		background: #ece9d8;
	}
	.side span,
	.help-title > span:last-child {
		writing-mode: vertical-rl;
		transform: rotate(180deg);
	}

	/* help pane and bottom bar */
	.help {
		display: flex;
		flex: none;
		height: 128px;
		border-bottom: 1px solid #000;
	}
	.help-title {
		display: flex;
		flex-direction: column;
		align-items: center;
		justify-content: space-between;
		width: 16px;
		padding: 2px 0 3px;
		color: #fff;
		background: linear-gradient(#3d95ff, #0054e3);
	}
	.help-title :global(.pane-buttons) {
		flex-direction: column;
		gap: 2px;
	}
	.help-body {
		display: flex;
		flex: 1;
		justify-content: flex-end;
		border: 1px solid #7f9db9;
	}
	footer {
		display: flex;
		flex: none;
		gap: 4px;
		height: 20px;
		padding: 2px 0 0 20px;
		border-bottom: 1px solid #0a5ad0;
		background: #aca899;
	}
	footer button {
		display: flex;
		align-items: center;
		gap: 1px;
		width: 116px;
		border: 1px solid #fff;
		border-bottom: 0;
		background: #ece9d8;
	}
	footer span {
		padding-bottom: 1px;
	}
</style>
